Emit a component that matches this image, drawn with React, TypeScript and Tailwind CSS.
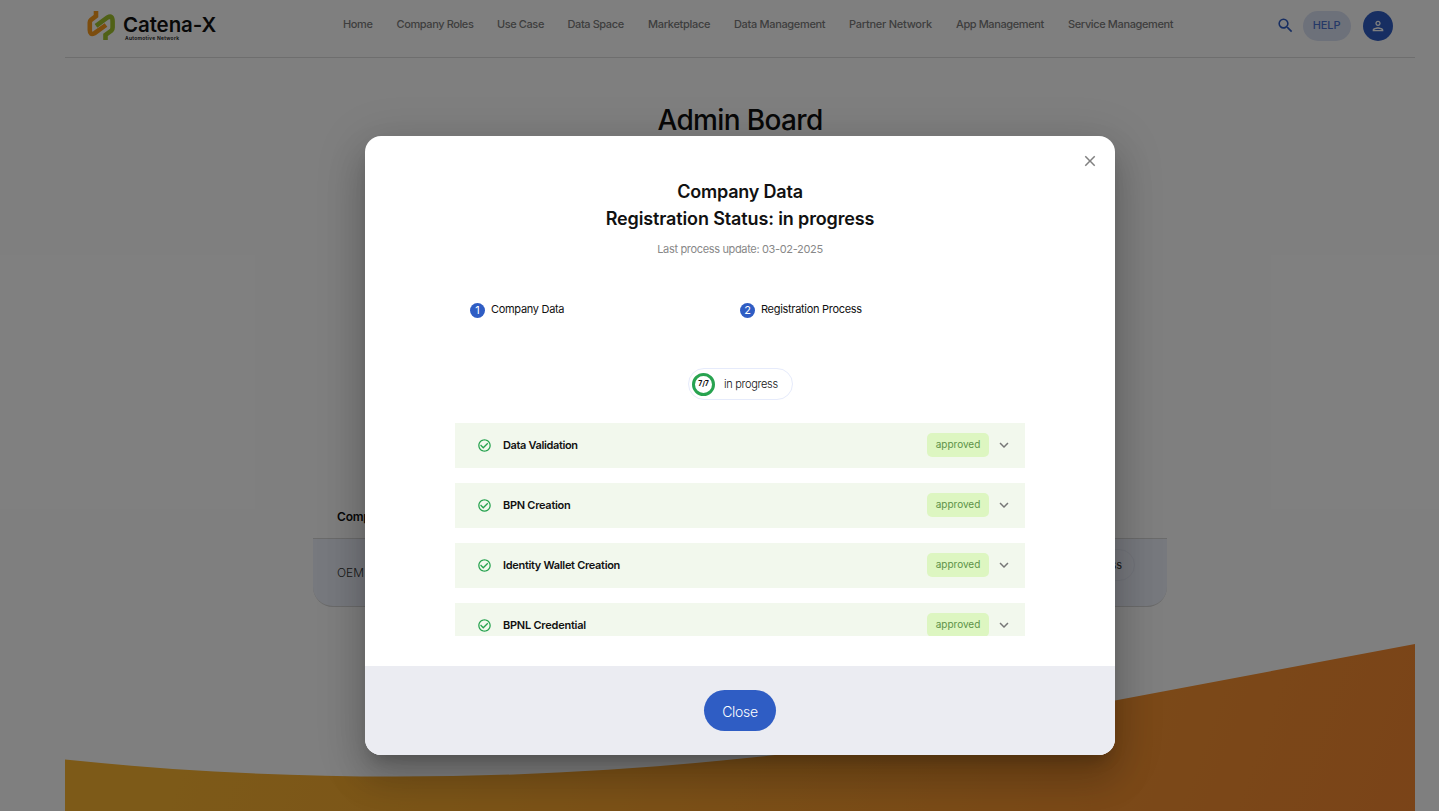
import React from "react";
import {
  MdCheckCircleOutline,
  MdClose,
  MdKeyboardArrowDown,
  MdOutlinePerson,
  MdSearch,
} from "react-icons/md";

const navItems = [
  { label: "Home", style: "w-[53.5px] tracking-[-0.4px]" },
  { label: "Company Roles", style: "w-[100.5px] tracking-[-0.4px]" },
  { label: "Use Case", style: "w-[70.5px] tracking-[-0.4px]" },
  { label: "Data Space", style: "w-[80.5px] tracking-[-0.4px]" },
  { label: "Marketplace", style: "w-[86px] tracking-[-0.3px]" },
  { label: "Data Management", style: "w-[115px] tracking-[-0.33px]" },
  { label: "Partner Network", style: "w-[107px] tracking-[-0.25px]" },
  { label: "App Management", style: "w-[112px] tracking-[-0.4px]" },
  { label: "Service Management", style: "w-[106px] tracking-[-0.37px]" },
];

const checks = [
  { label: "Data Validation", style: "tracking-[-0.36px]" },
  { label: "BPN Creation", style: "tracking-[-0.28px]" },
  { label: "Identity Wallet Creation", style: "tracking-[-0.31px]" },
  { label: "BPNL Credential", style: "tracking-[-0.24px]" },
];

function Logo() {
  return (
    <div className="flex h-[44px] w-[130px] pt-[10px]">
      <svg width="28" height="31" viewBox="0 0 28 31" fill="none" className="shrink-0">
        <path
          d="M9 1V6L4 9.800Q2.800 10.700 2.800 12.500V20Q2.800 25.700 7.500 23.200L19 15"
          stroke="#f99b1c"
          strokeWidth="4.6"
        />
        <path
          d="M18.500 30V25L24.500 20.500Q25.600 19.500 25.600 17.500V11.500Q25.600 4.500 20.500 7.500L9 15.800"
          stroke="#a0c22c"
          strokeWidth="4.6"
        />
      </svg>
      <div className="ml-[8px] flex flex-col whitespace-nowrap text-[#111]">
        <span className="mt-[5px] text-[20.5px] leading-[20px] font-semibold tracking-[-0.1px]">
          Catena-X
        </span>
        <span className="mt-px pl-[2px] text-[5px] leading-[5px] font-semibold tracking-[0.25px]">
          Automotive Network
        </span>
      </div>
    </div>
  );
}

function Header() {
  return (
    <header className="flex h-[58px] border-b border-[#dcdcdc] pl-[22px]">
      <Logo />
      <nav className="ml-[126px] flex pt-[16px] text-[11px] leading-[16px] font-medium whitespace-nowrap text-[#7c7c7c]">
        {navItems.map((item) => (
          <span key={item.label} className={item.style}>
            {item.label}
          </span>
        ))}
      </nav>
      <div className="ml-auto flex h-[30px] items-center self-start pt-[22px] pr-[22px]">
        <MdSearch size={19} className="relative -top-px mr-[8px] text-[#2f5dc4]" />
        <span className="mr-[12px] flex h-[30px] w-[48px] shrink-0 items-center justify-center rounded-full bg-[#dbe2f5] pr-px pb-[2px] text-[11px] font-medium tracking-[-0.1px] text-[#4a72cf]">
          HELP
        </span>
        <span className="flex size-[30px] shrink-0 items-center justify-center rounded-full bg-[#2f5dc4] pr-px pb-px text-white">
          <MdOutlinePerson size={16} />
        </span>
      </div>
    </header>
  );
}

function AdminBoard() {
  return (
    <div className="ml-[65px] flex h-[811px] w-[1350px] flex-col">
      <Header />
      <h1 className="mt-[44px] text-center text-[28px] leading-[36px] font-medium tracking-[-0.65px] text-[#111]">
        Admin Board
      </h1>
      <div className="mt-[357px] ml-[248px] w-[854px] text-[12px]">
        <div className="flex h-[43px] items-center pl-[24px] font-semibold tracking-[-0.2px] text-[#111]">
          Company Information
        </div>
        <div className="flex h-[69px] justify-between rounded-b-[20px] border-y border-[#d6d6d6] bg-[#eef2fc] pr-[32px] pl-[24px] text-[#333]">
          <span className="self-center font-light">OEM</span>
          <span className="mt-[10px] flex h-[32px] w-[105px] items-center justify-end rounded-full border border-[#e4e8f5] pr-[12px] text-[11px]">
            in progress
          </span>
        </div>
      </div>
      <svg
        className="mt-auto block shrink-0"
        width="1350"
        height="168"
        viewBox="65 643 1350 168"
      >
        <defs>
          <linearGradient id="wave" gradientUnits="userSpaceOnUse" x1="250" y1="580" x2="1420" y2="1000">
            <stop offset="0" stopColor="#fab431" />
            <stop offset="1" stopColor="#f58530" />
          </linearGradient>
        </defs>
        <path d="M65 759.500C415 796 765 773 1115 700.500L1415 644V811H65Z" fill="url(#wave)" />
      </svg>
    </div>
  );
}

function Step({ number, label }: { number: number; label: string }) {
  return (
    <div className="flex w-[270px] items-start">
      <span className="mt-px mr-[6px] flex size-[15px] items-center justify-center rounded-full bg-[#2f5dc4] pb-px text-[11px] leading-none text-white">
        {number}
      </span>
      <span className="text-[11px] leading-[15px] tracking-[-0.3px] text-[#111]">{label}</span>
    </div>
  );
}

function CheckRow({ label, style }: { label: string; style: string }) {
  return (
    <div className="flex h-[45px] shrink-0 items-center bg-[#f2f8ed] pr-[12px] pl-[22px]">
      <MdCheckCircleOutline size={15} className="text-[#28a350]" />
      <span className="ml-[11px] text-[11px] font-semibold text-[#111]">
        <span className={style}>{label}</span>
      </span>
      <span className="mb-px ml-auto flex h-[24px] w-[62px] items-center justify-center rounded-[5px] bg-[#ddf6c1] pb-px text-[10px] text-[#5c9247]">
        approved
      </span>
      <MdKeyboardArrowDown size={18} className="mb-px ml-[6px] text-[#777]" />
    </div>
  );
}

function StatusDialog() {
  return (
    <div
      role="dialog"
      className="flex h-[619px] w-[750px] flex-col overflow-hidden rounded-[16px] bg-white shadow-[0_11px_15px_-7px_rgba(0,0,0,0.2),0_24px_38px_3px_rgba(0,0,0,0.14),0_9px_46px_8px_rgba(0,0,0,0.12)]"
    >
      <div className="flex h-[42px] justify-end pt-[16px] pr-[16px]">
        <MdClose size={18} className="text-[#808080]" />
      </div>
      <h2 className="text-center text-[18px] leading-[27px] font-semibold tracking-[-0.13px] text-[#111]">
        <span className="tracking-[-0.2px]">Company Data</span>
        <br />
        Registration Status: in progress
      </h2>
      <p className="mt-[9px] text-center text-[11px] leading-[16px] tracking-[-0.34px] text-[#888]">
        Last process update: 03-02-2025
      </p>
      <div className="mt-[45px] ml-[105px] flex">
        <Step number={1} label="Company Data" />
        <Step number={2} label="Registration Process" />
      </div>
      <div className="mt-[50px] ml-[323px] flex h-[32px] w-[105px] shrink-0 items-center rounded-full border border-[#e6ebfb] pl-[3px]">
        <span className="flex size-[23px] items-center justify-center rounded-full border-3 border-[#28a350] text-[7px] font-bold tracking-[-0.2px] text-[#111]">
          7/7
        </span>
        <span className="ml-[9px] text-[11px] font-light tracking-[-0.3px] text-[#111]">in progress</span>
      </div>
      <div className="mx-[90px] mt-[23px] flex h-[213px] shrink-0 flex-col gap-[15px] overflow-hidden">
        {checks.map((check) => (
          <CheckRow key={check.label} label={check.label} style={check.style} />
        ))}
      </div>
      <div className="mt-auto flex h-[89px] shrink-0 items-center justify-center bg-[#ebecf2]">
        <button className="h-[41px] w-[72px] rounded-full bg-[#2f5dc4] pt-px text-[14px] font-light tracking-[-0.3px] text-white">
          Close
        </button>
      </div>
    </div>
  );
}

export default function App() {
  return (
    <div className="relative h-[811px] w-[1439px] overflow-hidden bg-white font-['Inter',sans-serif]">
      <AdminBoard />
      <div className="absolute inset-0 bg-black/50 pt-[136px] pl-[365px]">
        <StatusDialog />
      </div>
    </div>
  );
}
